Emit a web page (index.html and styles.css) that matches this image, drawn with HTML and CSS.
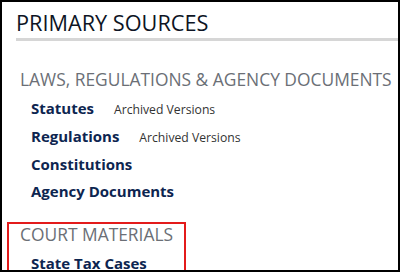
FILE: index.html
```html
<!DOCTYPE html>
<html lang="en">
<head>
    <meta charset="UTF-8">
    <meta name="viewport" content="width=device-width, initial-scale=1.0">
    <title>Primary Sources</title>
    <link rel="stylesheet" href="styles.css">
</head>
<body>
    <div class="frame">
        <h1 class="page-title">PRIMARY SOURCES</h1>

        <div class="section">
            <h2 class="section-title">LAWS, REGULATIONS &amp; AGENCY DOCUMENTS</h2>
            <ul class="links">
                <li><a href="#">Statutes</a> <span class="extra">Archived Versions</span></li>
                <li><a href="#">Regulations</a> <span class="extra">Archived Versions</span></li>
                <li><a href="#">Constitutions</a></li>
                <li><a href="#">Agency Documents</a></li>
            </ul>
        </div>

        <div class="section highlight">
            <h2 class="section-title">COURT MATERIALS</h2>
            <ul class="links">
                <li><a href="#">State Tax Cases</a></li>
            </ul>
        </div>
    </div>
</body>
</html>
```

FILE: styles.css
```css
body {
    margin: 0;
    padding: 0;
    font-family: "Open Sans", Arial, sans-serif;
    background-color: #ffffff;
}

.frame {
    box-sizing: border-box;
    width: 400px;
    height: 272px;
    border: 2px solid #000;
    padding: 8px 0 0 14px;
    overflow: hidden;
}

.page-title {
    margin: 0;
    font-size: 21.7px;
    font-weight: 400;
    color: #0d1424;
    line-height: 26px;
    padding-bottom: 2px;
    border-bottom: 3px solid #d6d6d6;
}

.section {
    margin-top: 27px;
}

.section-title {
    margin: 0 0 5px 4px;
    font-size: 17.4px;
    font-weight: 400;
    color: #6b6f76;
    line-height: 22px;
}

.links {
    list-style: none;
    margin: 0;
    padding: 0 0 0 15px;
}

.links li {
    font-size: 15px;
    line-height: 27px;
}

.links a {
    font-size: 15px;
    font-weight: 700;
    color: #0d2550;
    text-decoration: none;
}

.extra {
    margin-left: 16px;
    font-size: 12.2px;
    color: #333;
}

/* red box around court materials */
.highlight {
    box-sizing: border-box;
    width: 179px;
    height: 50px;
    margin: 17px 0 0 -9px;
    padding: 0 0 0 7px;
    border: 2px solid #e31b1b;
}

.highlight .section-title {
    line-height: 20px;
    margin-bottom: 6px;
}
```
